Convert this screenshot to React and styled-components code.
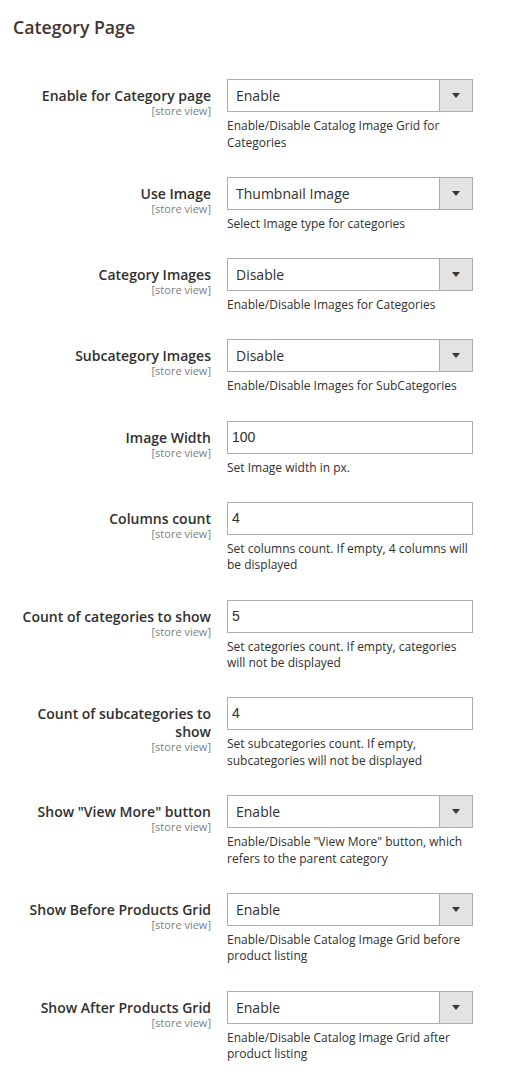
import React from "react";
import styled, { createGlobalStyle } from "styled-components";

const Global = createGlobalStyle`
  html, body { margin: 0; padding: 0; background: #ffffff; }
  body { font-family: "Open Sans", "Noto Sans", sans-serif; color: #303030; }
  * { box-sizing: border-box; }
`;

const Page = styled.div`
  padding: 17px 12px 0 12px;
  width: 517px;
`;

const Title = styled.h2`
  margin: 0 0 42px 1px;
  font-size: 17.7px;
  line-height: 20px;
  font-weight: 600;
  color: #41362f;
`;

const Fieldset = styled.div`
  display: flex;
  flex-direction: column;
`;

const Row = styled.div`
  display: grid;
  grid-template-columns: 199px 246px;
  column-gap: 16px;
  padding-bottom: 25.75px;
`;

const LabelCol = styled.div`
  padding-top: 8px;
  text-align: right;
  display: flex;
  flex-direction: column;
  align-items: flex-end;
`;

const Label = styled.span`
  font-size: 14px;
  line-height: 18px;
  font-weight: 600;
  color: #303030;
`;

const Scope = styled.span`
  font-size: 11px;
  line-height: 14px;
  color: #808080;
  margin-top: -1px;
`;

const Control = styled.div`
  display: flex;
  flex-direction: column;
`;

const SelectBox = styled.div`
  height: 33px;
  border: 1px solid #adadad;
  display: flex;
  background: #ffffff;
`;

const SelectValue = styled.span`
  flex: 1;
  padding-left: 8px;
  font-size: 14px;
  line-height: 31px;
  color: #303030;
`;

const SelectButton = styled.span`
  width: 33px;
  border-left: 1px solid #adadad;
  background: #e3e3e3;
  display: flex;
  align-items: center;
  justify-content: center;
  &::after {
    content: "";
    width: 0;
    height: 0;
    border-left: 4.5px solid transparent;
    border-right: 4.5px solid transparent;
    border-top: 5px solid #41362f;
  }
`;

const TextBox = styled.div`
  height: 33px;
  border: 1px solid #adadad;
  padding-left: 4px;
  font-family: "Liberation Sans", Arial, sans-serif;
  font-size: 14px;
  line-height: 31px;
  color: #303030;
  background: #ffffff;
`;

const Note = styled.div`
  margin-top: 6px;
  font-size: 12px;
  line-height: 16.5px;
  color: #303030;
`;

const fields = [
  { label: "Enable for Category page", type: "select", value: "Enable", note: "Enable/Disable Catalog Image Grid for Categories" },
  { label: "Use Image", type: "select", value: "Thumbnail Image", note: "Select Image type for categories" },
  { label: "Category Images", type: "select", value: "Disable", note: "Enable/Disable Images for Categories" },
  { label: "Subcategory Images", type: "select", value: "Disable", note: "Enable/Disable Images for SubCategories" },
  { label: "Image Width", type: "text", value: "100", note: "Set Image width in px." },
  { label: "Columns count", type: "text", value: "4", note: "Set columns count. If empty, 4 columns will be displayed" },
  { label: "Count of categories to show", type: "text", value: "5", note: "Set categories count. If empty, categories will not be displayed" },
  { label: "Count of subcategories to show", type: "text", value: "4", note: "Set subcategories count. If empty, subcategories will not be displayed" },
  { label: 'Show "View More" button', type: "select", value: "Enable", note: 'Enable/Disable "View More" button, which refers to the parent category' },
  { label: "Show Before Products Grid", type: "select", value: "Enable", note: "Enable/Disable Catalog Image Grid before product listing" },
  { label: "Show After Products Grid", type: "select", value: "Enable", note: "Enable/Disable Catalog Image Grid after product listing" },
];

export default function App() {
  return (
    <>
      <Global />
      <Page>
        <Title>Category Page</Title>
        <Fieldset>
          {fields.map((f) => (
            <Row key={f.label}>
              <LabelCol>
                <Label>{f.label}</Label>
                <Scope>[store view]</Scope>
              </LabelCol>
              <Control>
                {f.type === "select" ? (
                  <SelectBox>
                    <SelectValue>{f.value}</SelectValue>
                    <SelectButton />
                  </SelectBox>
                ) : (
                  <TextBox>{f.value}</TextBox>
                )}
                <Note>{f.note}</Note>
              </Control>
            </Row>
          ))}
        </Fieldset>
      </Page>
    </>
  );
}
